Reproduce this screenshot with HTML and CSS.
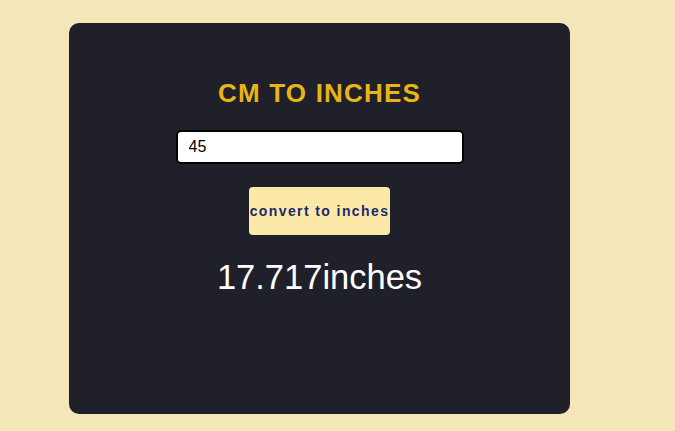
FILE: index.html
```html
<!DOCTYPE html>
<html lang="en">
<head>
<meta charset="utf-8">
<title>CM to Inches</title>
<link rel="stylesheet" href="styles.css">
</head>
<body>
  <main class="card">
    <h1 class="title">CM TO INCHES</h1>
    <input class="field" type="text" value="45">
    <button class="convert" type="button">convert to inches</button>
    <p class="result">17.717inches</p>
  </main>
</body>
</html>
```

FILE: styles.css
```css
html, body {
  margin: 0;
  padding: 0;
}
body {
  background: #f5e6b9;
  font-family: "Liberation Sans", Arial, sans-serif;
  padding: 23px 0 0 69px;
  height: 431px;
  box-sizing: border-box;
  overflow: hidden;
}
.card {
  width: 501px;
  height: 391px;
  box-sizing: border-box;
  background: #20202a;
  border-radius: 10px;
  display: flex;
  flex-direction: column;
  align-items: center;
  padding-top: 55px;
}
.title {
  margin: 0;
  font-size: 26px;
  line-height: 30px;
  font-weight: bold;
  letter-spacing: 1.2px;
  color: #e8b417;
}
.field {
  margin-top: 22px;
  width: 288px;
  height: 34px;
  box-sizing: border-box;
  border: 2px solid #000;
  border-radius: 5px;
  padding: 0 10px 0 11px;
  font-family: "Liberation Sans", Arial, sans-serif;
  font-size: 16px;
  color: #000;
  background: #fff;
  outline: none;
}
.convert {
  margin-top: 23px;
  width: 141px;
  height: 48px;
  padding: 0;
  border: none;
  border-radius: 4px;
  background: #fde9a7;
  color: #1a2a6c;
  font-family: "Liberation Sans", Arial, sans-serif;
  font-size: 14px;
  font-weight: bold;
  letter-spacing: 1.4px;
}
.result {
  margin: 22px 0 0;
  font-size: 34.5px;
  line-height: 40px;
  color: #fff;
}
```
